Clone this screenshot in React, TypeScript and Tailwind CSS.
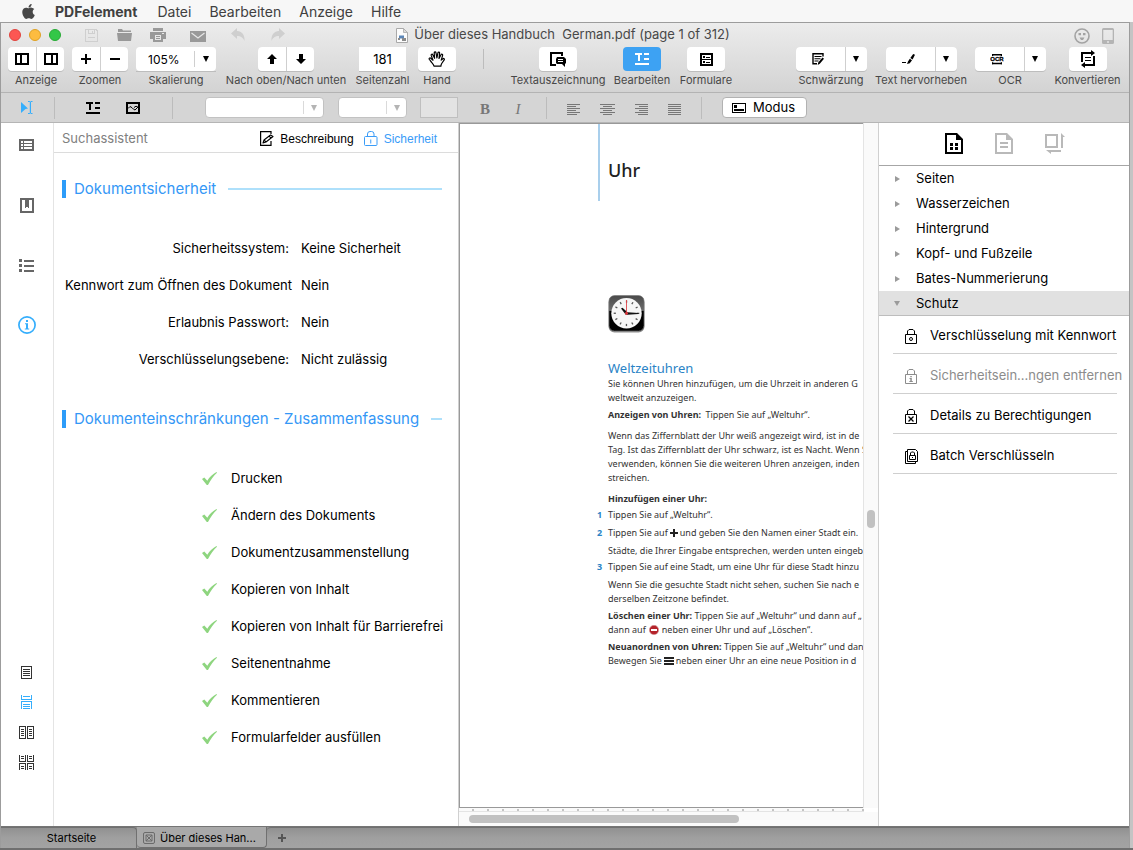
import React from "react";
import type { ReactNode } from "react";
import { FaApple } from "react-icons/fa";

const MENU = ["Datei", "Bearbeiten", "Anzeige", "Hilfe"];

const SECURITY = [
  { label: "Sicherheitssystem:", value: "Keine Sicherheit" },
  { label: "Kennwort zum Öffnen des Dokument", value: "Nein", flush: true },
  { label: "Erlaubnis Passwort:", value: "Nein" },
  { label: "Verschlüsselungsebene:", value: "Nicht zulässig" },
];

const PERMISSIONS = [
  "Drucken",
  "Ändern des Dokuments",
  "Dokumentzusammenstellung",
  "Kopieren von Inhalt",
  "Kopieren von Inhalt für Barrierefrei",
  "Seitenentnahme",
  "Kommentieren",
  "Formularfelder ausfüllen",
];

const TREE = ["Seiten", "Wasserzeichen", "Hintergrund", "Kopf- und Fußzeile", "Bates-Nummerierung"];

/* ---------- icons ---------- */

function Icon({ w, h, children, crisp = true }: { w: number; h: number; children: ReactNode; crisp?: boolean }) {
  return (
    <svg
      width={w}
      height={h}
      viewBox={`0 0 ${w} ${h}`}
      fill="none"
      stroke="none"
      shapeRendering={crisp ? "crispEdges" : "auto"}
      aria-hidden="true"
      className="block shrink-0"
    >
      {children}
    </svg>
  );
}

const LeftPaneIcon = () => (
  <Icon w={14} h={12}>
    <path fill="currentColor" fillRule="evenodd" d="M0 0h14v12H0zM2 2v8h3V2zM7 2v8h5V2z" />
  </Icon>
);
const RightPaneIcon = () => (
  <Icon w={14} h={12}>
    <path fill="currentColor" fillRule="evenodd" d="M0 0h14v12H0zM2 2v8h5V2zM9 2v8h3V2z" />
  </Icon>
);
const PlusIcon = () => (
  <Icon w={10} h={10}>
    <path fill="currentColor" d="M4 0h2v4h4v2H6v4H4V6H0V4h4z" />
  </Icon>
);
const MinusIcon = () => (
  <Icon w={10} h={10}>
    <path fill="currentColor" d="M0 4h10v2H0z" />
  </Icon>
);
const UpIcon = () => (
  <Icon w={10} h={10} crisp={false}>
    <path fill="currentColor" d="M5 0l5 5H7v5H3V5H0z" />
  </Icon>
);
const DownIcon = () => (
  <Icon w={10} h={10} crisp={false}>
    <path fill="currentColor" d="M5 10l5-5H7V0H3v5H0z" />
  </Icon>
);
const Caret = () => (
  <Icon w={6} h={6} crisp={false}>
    <path fill="currentColor" d="M0 0h6L3 6z" />
  </Icon>
);
const HandIcon = () => (
  <Icon w={18} h={16} crisp={false}>
    <path
      stroke="currentColor"
      strokeWidth="1.2"
      strokeLinecap="round"
      strokeLinejoin="round"
      d="M6 15.2c-.3-1.7-1.2-2.4-2.4-3.8-.9-1-1.4-2.200-2.300-3.100-.7-.8.5-1.900 1.500-1.100L5 9.200 3.200 4.400c-.4-1.200 1.100-1.800 1.600-.7l1.800 3.600L6.200 2c-.1-1.300 1.600-1.400 1.800-.2l.9 5.200L9.900 1.900c.3-1.200 1.900-.9 1.700.3L11 7.500l2-3.700c.6-1.100 2-.4 1.600.8l-1.400 4.500 1.700-1.300c.9-.8 1.900.2 1.300 1.100l-2.500 3.600c-.5.8-.8 1.500-.8 2.700z"
    />
  </Icon>
);
const MarkupIcon = () => (
  <Icon w={16} h={15} crisp={false}>
    <path stroke="currentColor" strokeWidth="2" d="M12 4V1H1v12h5" />
    <path fill="currentColor" fillRule="evenodd" d="M7 5h7l2 2v4l-1 1v3l-3-3H7L6 11V7zM8 7h5v1H8zM8 9h5v1H8z" />
  </Icon>
);
const TextEditIcon = () => (
  <Icon w={14} h={12}>
    <path fill="currentColor" d="M0 0h7v2H5v6H3V2H0zM9 0h5v2H9zM9 5h5v2H9zM0 10h14v2H0z" />
  </Icon>
);
const FormIcon = () => (
  <Icon w={13} h={13}>
    <path fill="currentColor" fillRule="evenodd" d="M0 0h13v13H0zM2 2v4h9V2zM2 7v4h9V7z" />
    <path fill="currentColor" d="M3 3h2v2H3zM3 8h2v2H3zM6 4h4v1H6zM6 9h4v1H6z" />
  </Icon>
);
const RedactIcon = () => (
  <Icon w={12} h={12} crisp={false}>
    <path stroke="currentColor" strokeWidth="1.400" d="M11 3.500V.7H1v10h4" />
    <path fill="currentColor" d="M2.500 3h7v1h-7zM2.500 5.200h6v1h-6zM2.500 7.400h4v1h-4zM10.500 4.500l1.500 1.300-4.200 5L5.700 12l.5-2.500z" />
  </Icon>
);
const HighlightIcon = () => (
  <Icon w={13} h={10} crisp={false}>
    <path fill="currentColor" d="M0 8h4v1H0zM11.200 0L13 .8 10.600 5.500 8.300 4zM7.800 4.700l2.200 1.500-2.200 3L5 10l1-2.500z" />
  </Icon>
);
const OcrIcon = () => (
  <Icon w={14} h={12} crisp={false}>
    <path fill="currentColor" d="M2 1h10v1.400H2zM2 9.800h10v1.400H2z" />
    <path fill="currentColor" d="M2 1h1.200v2H2zM10.800 1H12v2h-1.200zM2 9.200h1.200v2H2zM10.800 9.200H12v2h-1.200z" />
    <text x="7" y="8.200" textAnchor="middle" fill="currentColor" stroke="currentColor" strokeWidth=".3" fontSize="6" fontWeight="700" fontFamily="Liberation Sans, sans-serif">
      OCR
    </text>
  </Icon>
);
const ConvertIcon = () => (
  <Icon w={14} h={18} crisp={false}>
    <path fill="currentColor" d="M0 2h10V0l4 3-4 3V4H2v8H0zM14 16H4v2l-4-3 4-3v2h8V6h2zM4 7h6v1H4zM4 10h6v1H4z" />
  </Icon>
);
const CursorIcon = () => (
  <Icon w={13} h={14} crisp={false}>
    <path fill="currentColor" d="M1 1l7 6.500-2.500.4L1 12zM8 0h1.500l.8.700L11 0h1.500v1H11v11h1.500v1H11l-.7-.7-.8.700H8v-1h1.800V1H8z" />
  </Icon>
);
const PictureIcon = () => (
  <Icon w={14} h={12} crisp={false}>
    <path stroke="currentColor" strokeWidth="2" d="M1 1h12v10H1z" />
    <path stroke="currentColor" strokeWidth="1" d="M2 6.500l2-2 2 1.200 1.500 1.500L9 8l3-3M8 5.500l2-1.300 2 1" />
  </Icon>
);
const ModeIcon = () => (
  <Icon w={14} h={10}>
    <path fill="currentColor" fillRule="evenodd" d="M0 0h14v10H0zM1 1v8h12V1z" />
    <path fill="currentColor" d="M2 2h3v3H2zM2 6h10v2H2z" />
  </Icon>
);
const ALIGN_PATHS = [
  "M0 0h13v1H0zM0 2h9v1H0zM0 4h13v1H0zM0 6h9v1H0zM0 8h13v1H0zM0 10h10v1H0z",
  "M0 0h15v1H0zM3 2h9v1H3zM0 4h15v1H0zM3 6h9v1H3zM0 8h15v1H0zM3 10h9v1H3z",
  "M0 0h13v1H0zM4 2h9v1H4zM0 4h13v1H0zM4 6h9v1H4zM0 8h13v1H0zM3 10h10v1H3z",
  "M0 0h13v1H0zM0 2h13v1H0zM0 4h13v1H0zM0 6h13v1H0zM0 8h13v1H0zM0 10h13v1H0z",
];
const ALIGN_NAMES = ["Linksbündig", "Zentriert", "Rechtsbündig", "Blocksatz"];

const SaveIcon = () => (
  <Icon w={13} h={13}>
    <path fill="currentColor" fillRule="evenodd" d="M0 0h11l2 2v11H0zM1 1v11h11V3l-2-2v4H3V1zM4 1v3h5V1z" />
    <path fill="currentColor" d="M7 2h1v2H7zM3 8h7v1H3z" />
  </Icon>
);
const FolderIcon = () => (
  <Icon w={15} h={12} crisp={false}>
    <path fill="currentColor" d="M1 0h4l1 1.500h8V3H1zM0 4h15l-1 8H1z" />
  </Icon>
);
const PrinterIcon = () => (
  <Icon w={16} h={14}>
    <path fill="currentColor" fillRule="evenodd" d="M3 0h10v3H3zM0 4h16v7h-3v3H3v-3H0zM5 7v5h6V7zM12 5v1h2V5z" />
    <path fill="currentColor" d="M6 8h4v1H6zM6 10h4v1H6z" />
  </Icon>
);
const MailIcon = () => (
  <Icon w={16} h={11} crisp={false}>
    <rect width="16" height="11" fill="currentColor" />
    <path stroke="#e6e6e6" strokeWidth="1.200" d="M1.500 2L8 7l6.500-5" />
  </Icon>
);
const UndoIcon = () => (
  <Icon w={14} h={14} crisp={false}>
    <path fill="currentColor" d="M6 0v3c5 .3 8 4 7.500 10C12 9.500 10 8 6 8v3L0 5.500z" />
  </Icon>
);
const RedoIcon = () => (
  <Icon w={14} h={14} crisp={false}>
    <path fill="currentColor" d="M8 0v3C3 3.300 0 7 .5 13 2 9.500 4 8 8 8v3l6-5.500z" />
  </Icon>
);
const PdfFileIcon = () => (
  <Icon w={12} h={15} crisp={false}>
    <path fill="#fcfcfc" stroke="#a9a9a9" d="M.5.5h7l4 4v10H.5z" />
    <path fill="#dcdcdc" stroke="#a9a9a9" strokeWidth=".8" d="M7.500.5v4h4z" />
    <path fill="#5b86b8" d="M3 7.500h5v3H3z" />
    <path fill="#8b8b8b" d="M2 10h2v2H2zM6 10h4v3H6z" />
  </Icon>
);
const SmileyIcon = () => (
  <Icon w={16} h={16} crisp={false}>
    <circle cx="8" cy="8" r="7" stroke="currentColor" strokeWidth="1.600" />
    <path fill="currentColor" d="M4.500 5H7v2.200H4.500zM9 5h2.500v2.200H9zM5.500 9.500h5L9 12H7z" />
  </Icon>
);
const TabletIcon = () => (
  <Icon w={12} h={16} crisp={false}>
    <path fill="currentColor" fillRule="evenodd" d="M1.500 0h9A1.500 1.500 0 0112 1.500v13a1.500 1.500 0 01-1.500 1.500h-9A1.500 1.500 0 010 14.500v-13A1.500 1.500 0 011.500 0zM1.300 2v10h9.400V2zM5 13.200v1.500h2v-1.500z" />
  </Icon>
);

const TableIcon = () => (
  <Icon w={15} h={12}>
    <path fill="currentColor" fillRule="evenodd" d="M0 0h15v12H0zM2 2v2h2V2zM5 2v2h8V2zM2 5v2h2V5zM5 5v2h8V5zM2 8v2h2V8zM5 8v2h8V8z" />
  </Icon>
);
const BookmarkIcon = () => (
  <Icon w={14} h={15}>
    <path fill="currentColor" fillRule="evenodd" d="M0 0h14v15H0zM2 2v11h10V2z" />
    <path fill="currentColor" d="M5 2h4v8H8V9H6v1H5z" />
  </Icon>
);
const ListIcon = () => (
  <Icon w={15} h={13}>
    <path fill="currentColor" d="M0 0h3v3H0zM0 5h3v3H0zM0 10h3v3H0zM5 1h10v2H5zM5 6h10v2H5zM5 11h10v2H5z" />
  </Icon>
);
const InfoIcon = () => (
  <Icon w={18} h={18} crisp={false}>
    <circle cx="9" cy="9" r="8.100" stroke="currentColor" strokeWidth="1.700" />
    <path fill="currentColor" d="M8 4h2v2H8zM7 7.200h3v5.300h1.200v1H6.800v-1H8V8.200H7z" />
  </Icon>
);
const SinglePageIcon = () => (
  <Icon w={11} h={13}>
    <path fill="currentColor" fillRule="evenodd" d="M0 0h11v13H0zM1 1v11h9V1z" />
    <path fill="currentColor" d="M2 3h7v1H2zM2 5h7v1H2zM2 7h7v1H2zM2 9h7v1H2z" />
  </Icon>
);
const ContinuousIcon = () => (
  <Icon w={11} h={14}>
    <path fill="currentColor" d="M0 0h1v4h9V0h1v5H0zM2 1h7v1H2zM0 6h11v8h-1V7H1v7H0zM2 9h7v1H2zM2 11h7v1H2zM2 13h7v1H2z" />
  </Icon>
);
const TwoPageIcon = () => (
  <Icon w={15} h={13}>
    <path fill="currentColor" fillRule="evenodd" d="M0 0h7v13H0zM1 1v11h5V1zM8 0h7v13H8zM9 1v11h5V1z" />
    <path fill="currentColor" d="M2 3h3v1H2zM2 5h3v1H2zM2 7h3v1H2zM2 9h3v1H2zM10 3h3v1h-3zM10 5h3v1h-3zM10 7h3v1h-3zM10 9h3v1h-3z" />
  </Icon>
);
const TwoPageContinuousIcon = () => (
  <Icon w={15} h={15}>
    <path
      fill="currentColor"
      d="M0 0h1v6h5V0h1v7H0zM8 0h1v6h5V0h1v7H8zM2 1h3v1H2zM2 3h3v1H2zM10 1h3v1h-3zM10 3h3v1h-3zM0 8h7v7H6V9H1v6H0zM8 8h7v7h-1V9H9v6H8zM2 11h3v1H2zM2 13h3v1H2zM10 11h3v1h-3zM10 13h3v1h-3z"
    />
  </Icon>
);

const DescribeIcon = () => (
  <Icon w={14} h={15} crisp={false}>
    <path stroke="currentColor" strokeWidth="1.200" d="M11 3V.6H.6v13.800H11V10" />
    <path stroke="currentColor" strokeWidth="1.100" strokeLinejoin="round" d="M3 12l1-3 6.500-5L13 5.500 6 11zM9 5l2 2.200M4.500 9.500L6 11" />
  </Icon>
);
const LockOutlineIcon = () => (
  <Icon w={14} h={15} crisp={false}>
    <rect x=".5" y="5.500" width="12.500" height="9" rx="1" stroke="currentColor" />
    <path stroke="currentColor" d="M3.500 5.500V3a2.500 2.500 0 012.500-2.500h1.500A2.500 2.500 0 0110 3v2.500M6.750 8.500v4" />
  </Icon>
);
const CheckIcon = () => (
  <Icon w={15} h={14} crisp={false}>
    <path fill="#8ed57f" d="M0 7L2.300 5.500l3 3.300C7.500 5 10.800 2 14.500 0l.5.700C11.500 4 8.500 8 6 13H4.800z" />
  </Icon>
);

const PageGridIcon = () => (
  <Icon w={18} h={21} crisp={false}>
    <path fill="currentColor" fillRule="evenodd" d="M0 0h12l6 6v15H0zM2 2v17h14V7h-5V2z" />
    <path fill="currentColor" d="M5 10h3v3H5zM10 10h3v3h-3zM5 14h3v3H5zM10 14h3v3h-3z" />
  </Icon>
);
const PageTextIcon = () => (
  <Icon w={18} h={21} crisp={false}>
    <path fill="currentColor" fillRule="evenodd" d="M0 0h12l6 6v15H0zM2 2v17h14V7h-5V2zM5 9h8v2H5zM5 13h8v2H5z" />
  </Icon>
);
const ScaleIcon = () => (
  <Icon w={20} h={21} crisp={false}>
    <path fill="currentColor" fillRule="evenodd" d="M0 1h13v14H0zM2 3v10h9V3zM16 0l4 4h-2v11h-2zM16 17v2H6v2l-5-4z" />
  </Icon>
);

function LockIcon({ kind }: { kind: "ring" | "info" | "cross" }) {
  return (
    <Icon w={12} h={15} crisp={false}>
      <path stroke="currentColor" strokeWidth="1" d="M.5 5.500h11v9H.5zM2.500 5.500V2l1.500-1.500h4L9.500 2v3.500" />
      {kind === "ring" && <circle cx="6" cy="10" r="1.500" stroke="currentColor" strokeWidth="1" />}
      {kind === "info" && <path fill="currentColor" d="M5.300 7h1.500v1.300H5.300zM4.500 9h2.300v3h1v1H4.400v-1h.9v-2h-.8z" />}
      {kind === "cross" && <path stroke="currentColor" strokeWidth="1.300" d="M3.500 7.500l5 5M8.500 7.500l-5 5" />}
    </Icon>
  );
}
const BatchLockIcon = () => (
  <Icon w={13} h={15} crisp={false}>
    <path stroke="currentColor" d="M2.500.5h8l2 2v10h-10zM2 2.500H.5v12h10V13" />
    <path stroke="currentColor" d="M4.500 6.500h6v4h-6zM5.500 6.500V4l1-1h2l1 1v2.500M7.500 8v1" />
  </Icon>
);

/* ---------- toolbar parts ---------- */

const KEY = "flex h-6 items-center justify-center bg-white text-black";
const FIELD_SHADOW = "shadow-[0_1px_0_#bdbdbd]";

function Group({ width, label, htmlFor, children }: { width: string; label: string; htmlFor?: string; children: ReactNode }) {
  return (
    <div className={`flex shrink-0 flex-col items-center ${width}`}>
      {children}
      {htmlFor ? (
        <label htmlFor={htmlFor} className="mt-px whitespace-nowrap text-[11px] leading-[17px] text-[#484848]">
          {label}
        </label>
      ) : (
        <span className="mt-px whitespace-nowrap text-[11px] leading-[17px] text-[#484848]">{label}</span>
      )}
    </div>
  );
}

function Pair({ names, children }: { names: [string, string]; children: [ReactNode, ReactNode] }) {
  return (
    <div className={`flex w-14 gap-px rounded bg-[#cfcfcf] ${FIELD_SHADOW}`}>
      <button type="button" aria-label={names[0]} className={`${KEY} w-7 rounded-l`}>
        {children[0]}
      </button>
      <button type="button" aria-label={names[1]} className={`${KEY} flex-1 rounded-r`}>
        {children[1]}
      </button>
    </div>
  );
}

function Single({ name, active, children }: { name: string; active?: boolean; children: ReactNode }) {
  return (
    <button
      type="button"
      aria-label={name}
      className={
        active
          ? "flex h-6 w-[38px] items-center justify-center rounded bg-[#3da2f3] text-white"
          : `${KEY} w-[38px] rounded ${FIELD_SHADOW}`
      }
    >
      {children}
    </button>
  );
}

function Split({ name, children }: { name: string; children: ReactNode }) {
  return (
    <div className={`flex gap-px rounded bg-[#cfcfcf] ${FIELD_SHADOW}`}>
      <button type="button" aria-label={name} className={`${KEY} w-[49px] rounded-l pr-1`}>
        {children}
      </button>
      <button type="button" aria-label={`${name} Optionen`} className={`${KEY} w-[21px] rounded-r`}>
        <Caret />
      </button>
    </div>
  );
}

function FormatSelect({ name, width }: { name: string; width: string }) {
  return (
    <div className={`relative h-[21px] shrink-0 ${width}`}>
      <select aria-label={name} className="h-full w-full appearance-none rounded-sm border border-[#c2c2c2] bg-white">
        <option></option>
      </select>
      <span className="pointer-events-none absolute inset-y-1 right-0 flex w-[21px] items-center justify-center border-l border-[#dadada] text-[#b4b4b4]">
        <Caret />
      </span>
    </div>
  );
}

const Divider = () => <span className="h-[22px] w-px shrink-0 bg-[#bcbcbc]" />;

/* ---------- document ---------- */

function Lines({ gap, lines, number }: { gap: string; lines: ReactNode[]; number?: string }) {
  return (
    <div className={`flex ${gap}`}>
      <span className="w-[11px] shrink-0 font-bold text-[#2a83c6]">{number}</span>
      <p>
        {lines.map((line, i) => (
          <span key={i} className="block">
            {line}
          </span>
        ))}
      </p>
    </div>
  );
}

const ClockFace = () => (
  <Icon w={37} h={38} crisp={false}>
    <defs>
      <linearGradient id="clock-case" x1="0" y1="0" x2="0" y2="1">
        <stop offset="0" stopColor="#4a4a4a" />
        <stop offset=".42" stopColor="#6b6b6b" />
        <stop offset=".45" stopColor="#000" />
        <stop offset="1" stopColor="#000" />
      </linearGradient>
    </defs>
    <rect x=".5" y="1.500" width="36" height="36" rx="6" fill="#8f8f8f" />
    <rect x="1" y=".5" width="35" height="35.500" rx="5.500" fill="url(#clock-case)" stroke="#777" strokeWidth=".6" />
    <circle cx="18.500" cy="18.300" r="15.200" fill="#f6f6f6" />
    {Array.from({ length: 12 }, (_, i) => (
      <rect key={i} x="17.900" y="5.500" width="1.300" height="2.200" fill="#555" transform={`rotate(${i * 30} 18.500 18.300)`} />
    ))}
    <path fill="#111" d="M13 13.500l1.500-.8 5 4.600 11 .600v1l-11 .8-1.500.3z" />
    <path stroke="#e0454a" strokeWidth=".9" d="M18.500 5v15" />
    <circle cx="18.500" cy="18.300" r="1.500" fill="#d8353b" />
  </Icon>
);

function SectionTitle({ children }: { children: ReactNode }) {
  return (
    <div className="flex items-center pl-2 pr-4">
      <span className="h-[18px] w-1 shrink-0 bg-[#2d9cf9]" />
      <h2 className="ml-2 whitespace-nowrap text-[15px] leading-[18px] text-[#3497f6]">{children}</h2>
      <span className="ml-3 h-0.5 flex-1 bg-[#aee0fb]" />
    </div>
  );
}

export default function App() {
  return (
    <div className="flex min-h-screen flex-col bg-[#c4c4c4] font-['Inter','Liberation_Sans',sans-serif] text-[13px] text-black">
      {/* system menu */}
      <nav className="flex h-[22px] shrink-0 items-center bg-[#f7f7f7] pl-5 text-[14px] text-[#404040]">
        <button type="button" aria-label="Apple" className="mr-[18px] text-[#484848]">
          <FaApple size={17} />
        </button>
        <button type="button" className="mr-5 font-bold">
          PDFelement
        </button>
        <div className="flex gap-[18px]">
          {MENU.map((m) => (
            <button key={m} type="button">
              {m}
            </button>
          ))}
        </div>
      </nav>

      <div className="mr-[3px] flex flex-1 flex-col border-x border-t border-[#9c9c9c] bg-white">
        {/* title bar */}
        <header className="shrink-0 border-b border-[#b3b3b3] bg-linear-to-b from-[#ececec] to-[#d3d3d3]">
          <div className="grid h-6 grid-cols-[1fr_auto_1fr] items-center">
            <div className="flex items-center pl-2 text-[#999]">
              <div className="flex gap-2">
                <button type="button" aria-label="Schließen" className="size-3 rounded-full border border-[#e0443e] bg-[#fc5753]" />
                <button type="button" aria-label="Minimieren" className="size-3 rounded-full border border-[#dea123] bg-[#fdbc40]" />
                <button type="button" aria-label="Vergrößern" className="size-3 rounded-full border border-[#27aa35] bg-[#33c748]" />
              </div>
              <button type="button" aria-label="Sichern" className="ml-6 text-[#cfcfcf]">
                <SaveIcon />
              </button>
              <button type="button" aria-label="Öffnen" className="ml-[19px]">
                <FolderIcon />
              </button>
              <button type="button" aria-label="Drucken" className="ml-[18px]">
                <PrinterIcon />
              </button>
              <button type="button" aria-label="E-Mail" className="ml-6 pt-0.5">
                <MailIcon />
              </button>
              <button type="button" aria-label="Widerrufen" className="ml-[25px] text-[#cfcfcf]">
                <UndoIcon />
              </button>
              <button type="button" aria-label="Wiederholen" className="ml-[26px] text-[#cfcfcf]">
                <RedoIcon />
              </button>
            </div>
            <div className="flex items-center gap-1.5 text-[13px] text-[#484848]">
              <PdfFileIcon />
              <h1 className="whitespace-pre pr-1">{"Über dieses Handbuch  German.pdf (page 1 of 312)"}</h1>
            </div>
            <div className="flex items-center justify-end gap-3 pr-[15px] pt-0.5 text-[#a3a3a3]">
              <button type="button" aria-label="Feedback">
                <SmileyIcon />
              </button>
              <button type="button" aria-label="Mobil" className="text-[#b4b4b4]">
                <TabletIcon />
              </button>
            </div>
          </div>

          {/* main toolbar */}
          <div className="flex h-[45px] items-start px-[3px]">
            <Group width="w-16" label="Anzeige">
              <Pair names={["Linke Leiste", "Rechte Leiste"]}>
                <LeftPaneIcon />
                <RightPaneIcon />
              </Pair>
            </Group>
            <Group width="w-16" label="Zoomen">
              <Pair names={["Vergrößern", "Verkleinern"]}>
                <PlusIcon />
                <MinusIcon />
              </Pair>
            </Group>
            <Group width="w-[88px]" label="Skalierung" htmlFor="zoom">
              <div className={`relative h-6 w-20 ${FIELD_SHADOW}`}>
                <select id="zoom" className="h-full w-full appearance-none rounded-sm bg-white pl-3 pt-0.5 text-[12px]">
                  <option>105%</option>
                </select>
                <span className="pointer-events-none absolute inset-y-1 right-0 flex w-[22px] items-center justify-center border-l border-[#cfcfcf]">
                  <Caret />
                </span>
              </div>
            </Group>
            <Group width="w-[132px]" label="Nach oben/Nach unten">
              <Pair names={["Nach oben", "Nach unten"]}>
                <UpIcon />
                <DownIcon />
              </Pair>
            </Group>
            <Group width="w-[61px]" label="Seitenzahl" htmlFor="page">
              <input id="page" defaultValue="181" className={`h-6 w-[47px] bg-white text-center text-[13px] ${FIELD_SHADOW}`} />
            </Group>
            <Group width="w-12" label="Hand">
              <Single name="Hand">
                <HandIcon />
              </Single>
            </Group>
            <span className="ml-[22px] mr-[26px] mt-0.5 h-5 w-px shrink-0 bg-[#bcbcbc]" />
            <Group width="w-24" label="Textauszeichnung">
              <Single name="Textauszeichnung">
                <MarkupIcon />
              </Single>
            </Group>
            <Group width="w-[72px]" label="Bearbeiten">
              <Single name="Bearbeiten" active>
                <TextEditIcon />
              </Single>
            </Group>
            <Group width="w-14" label="Formulare">
              <Single name="Formulare">
                <FormIcon />
              </Single>
            </Group>
            <div className="ml-auto flex">
              <Group width="w-20" label="Schwärzung">
                <Split name="Schwärzung">
                  <RedactIcon />
                </Split>
              </Group>
              <Group width="w-[100px]" label="Text hervorheben">
                <Split name="Text hervorheben">
                  <HighlightIcon />
                </Split>
              </Group>
              <Group width="w-[78px]" label="OCR">
                <Split name="OCR">
                  <OcrIcon />
                </Split>
              </Group>
              <Group width="w-[77px]" label="Konvertieren">
                <Single name="Konvertieren">
                  <ConvertIcon />
                </Single>
              </Group>
            </div>
          </div>
        </header>

        {/* format bar */}
        <div className="flex h-[30px] shrink-0 items-center border-b border-[#b5b5b5] bg-[#d5d5d5] pl-[19px]">
          <button type="button" aria-label="Auswahl" className="mr-[21px] text-[#35aefc]">
            <CursorIcon />
          </button>
          <Divider />
          <button type="button" aria-label="Text bearbeiten" className="ml-[31px]">
            <TextEditIcon />
          </button>
          <button type="button" aria-label="Bild bearbeiten" className="ml-[26px] mr-8">
            <PictureIcon />
          </button>
          <Divider />
          <span className="w-8 shrink-0" />
          <FormatSelect name="Schriftart" width="w-[119px]" />
          <span className="w-[14px] shrink-0" />
          <FormatSelect name="Schriftgröße" width="w-[69px]" />
          <button type="button" aria-label="Schriftfarbe" className="ml-[13px] h-[21px] w-[38px] shrink-0 border border-[#bfbfbf] bg-[#e3e3e3]" />
          <button type="button" className="ml-[15px] w-6 pt-1 font-['Liberation_Serif',serif] text-[15px] font-bold text-[#777]">
            B
          </button>
          <button type="button" className="ml-[9px] w-6 pt-1 font-['Liberation_Serif',serif] text-[15px] italic text-[#777]">
            I
          </button>
          <span className="w-4 shrink-0" />
          <Divider />
          <div className="mx-5 flex gap-5 pt-1 text-[#777]">
            {ALIGN_PATHS.map((d, i) => (
              <button key={d} type="button" aria-label={ALIGN_NAMES[i]}>
                <Icon w={i === 1 ? 15 : 13} h={11}>
                  <path fill="currentColor" d={d} />
                </Icon>
              </button>
            ))}
          </div>
          <Divider />
          <button
            type="button"
            className="ml-5 flex h-[21px] shrink-0 items-center gap-[7px] rounded border border-[#b2b2b2] bg-white pl-[9px] pr-[11px] text-[13px]"
          >
            <ModeIcon />
            Modus
          </button>
        </div>

        <div className="flex flex-1">
          {/* icon rail */}
          <div className="flex w-[53px] shrink-0 flex-col items-center border-r border-[#e4e4e4] pb-[49px] pr-px text-[#666]">
            <div className="mt-[7px] flex flex-col gap-[30px]">
              <button type="button" aria-label="Miniaturen" className="flex h-[30px] items-center justify-center">
                <TableIcon />
              </button>
              <button type="button" aria-label="Lesezeichen" className="flex h-[30px] items-center justify-center">
                <BookmarkIcon />
              </button>
              <button type="button" aria-label="Gliederung" className="flex h-[30px] items-center justify-center">
                <ListIcon />
              </button>
              <button type="button" aria-label="Information" className="flex h-[30px] items-center justify-center text-[#35aefc]">
                <InfoIcon />
              </button>
            </div>
            <div className="mt-auto flex flex-col text-[#333]">
              <button type="button" aria-label="Einzelseite" className="flex h-[30px] items-center justify-center">
                <SinglePageIcon />
              </button>
              <button type="button" aria-label="Fortlaufend" className="flex h-[30px] items-center justify-center text-[#35aefc]">
                <ContinuousIcon />
              </button>
              <button type="button" aria-label="Doppelseite" className="flex h-[30px] items-center justify-center">
                <TwoPageIcon />
              </button>
              <button type="button" aria-label="Doppelseite fortlaufend" className="flex h-[30px] items-center justify-center">
                <TwoPageContinuousIcon />
              </button>
            </div>
          </div>

          {/* security panel */}
          <section className="w-[404px] shrink-0">
            <div className="flex h-[30px] items-center border-b border-[#dcdcdc] pl-2 pr-[21px] pt-0.5">
              <span className="text-[13px] text-[#808080]">Suchassistent</span>
              <div className="ml-auto flex gap-2.5 font-['Liberation_Sans',sans-serif] text-[12px]">
                <button type="button" className="flex items-center gap-1.5">
                  <DescribeIcon />
                  Beschreibung
                </button>
                <button type="button" className="flex items-center gap-1.5 text-[#3a9cf8]">
                  <LockOutlineIcon />
                  Sicherheit
                </button>
              </div>
            </div>

            <div className="pt-[27px]">
              <SectionTitle>Dokumentsicherheit</SectionTitle>
            </div>
            <dl className="pt-8">
              {SECURITY.map((row) => (
                <div key={row.label} className="flex h-[37px] items-center whitespace-nowrap">
                  <dt className={row.flush ? "flex w-[238px] justify-end" : "flex w-[238px] justify-end pr-[3px]"}>{row.label}</dt>
                  <dd className="ml-[9px]">{row.value}</dd>
                </div>
              ))}
            </dl>
            <div className="pt-8">
              <SectionTitle>Dokumenteinschränkungen - Zusammenfassung</SectionTitle>
            </div>
            <ul className="pt-8">
              {PERMISSIONS.map((p) => (
                <li key={p} className="flex h-[37px] items-center gap-[14px] whitespace-nowrap pl-[148px]">
                  <CheckIcon />
                  {p}
                </li>
              ))}
            </ul>
          </section>

          {/* document view */}
          <main className="flex min-w-0 flex-1 flex-col border-l border-[#d0d0d0]">
            <div className="flex min-h-0 flex-1">
              <article className="flex min-w-0 flex-1 flex-col overflow-hidden whitespace-nowrap border border-r-0 border-[#999] bg-white pl-[137px] font-['Noto_Sans',sans-serif] text-[9px] leading-[14px] text-[#333]">
                <div className="ml-px flex h-[77px] shrink-0 items-center border-l-2 border-[#a9cfec] pl-2 pt-[14px]">
                  <h2 className="text-[18px] font-medium text-[#222]">Uhr</h2>
                </div>
                <div className="ml-[11px] mt-[94px]">
                  <ClockFace />
                </div>
                <h3 className="ml-[11px] mt-[26px] text-[13px] leading-[18px] text-[#2a83c6]">Weltzeituhren</h3>
                <Lines gap="" lines={["Sie können Uhren hinzufügen, um die Uhrzeit in anderen G", "weltweit anzuzeigen."]} />
                <Lines
                  gap="mt-[3px]"
                  lines={[
                    <>
                      <b className="mr-0.5">Anzeigen von Uhren:</b> Tippen Sie auf „Weltuhr“.
                    </>,
                  ]}
                />
                <Lines
                  gap="mt-[7px]"
                  lines={[
                    "Wenn das Ziffernblatt der Uhr weiß angezeigt wird, ist in de",
                    "Tag. Ist das Ziffernblatt der Uhr schwarz, ist es Nacht. Wenn S",
                    "verwenden, können Sie die weiteren Uhren anzeigen, inden",
                    "streichen.",
                  ]}
                />
                <Lines gap="mt-[7px]" lines={[<b>Hinzufügen einer Uhr:</b>]} />
                <Lines gap="mt-0.5" number="1" lines={["Tippen Sie auf „Weltuhr“."]} />
                <Lines
                  gap="mt-1"
                  number="2"
                  lines={[
                    <span className="flex items-center gap-0.5">
                      Tippen Sie auf
                      <Icon w={8} h={8}>
                        <path fill="#222" d="M3 0h2v3h3v2H5v3H3V5H0V3h3z" />
                      </Icon>
                      und geben Sie den Namen einer Stadt ein.
                    </span>,
                  ]}
                />
                <Lines gap="mt-1" lines={["Städte, die Ihrer Eingabe entsprechen, werden unten eingeb"]} />
                <Lines gap="mt-0.5" number="3" lines={["Tippen Sie auf eine Stadt, um eine Uhr für diese Stadt hinzu"]} />
                <Lines gap="mt-1" lines={["Wenn Sie die gesuchte Stadt nicht sehen, suchen Sie nach e", "derselben Zeitzone befindet."]} />
                <Lines
                  gap="mt-[3px]"
                  lines={[
                    <>
                      <b>Löschen einer Uhr:</b> Tippen Sie auf „Weltuhr“ und dann auf „
                    </>,
                    <span className="flex items-center gap-[3px]">
                      dann auf
                      <Icon w={10} h={10} crisp={false}>
                        <circle cx="5" cy="5" r="4.700" fill="#b5232b" stroke="#d9a3a5" strokeWidth=".6" />
                        <path fill="#fff" d="M2 4h6v2H2z" />
                      </Icon>
                      neben einer Uhr und auf „Löschen“.
                    </span>,
                  ]}
                />
                <Lines
                  gap="mt-[3px]"
                  lines={[
                    <>
                      <b>Neuanordnen von Uhren:</b> Tippen Sie auf „Weltuhr“ und dan
                    </>,
                    <span className="flex items-center gap-0.5">
                      Bewegen Sie
                      <Icon w={10} h={8}>
                        <path fill="#222" d="M0 0h10v2H0zM0 3h10v2H0zM0 6h10v2H0z" />
                      </Icon>
                      neben einer Uhr an eine neue Position in d
                    </span>,
                  ]}
                />
              </article>
              <div className="flex w-[15px] shrink-0 flex-col items-center border-l border-[#e4e4e4] bg-[#fafafa] pt-[387px]">
                <span className="h-[18px] w-2 rounded-full bg-[#c1c1c1]" />
              </div>
            </div>
            <div className="mr-[14px] h-1 shrink-0 border-b border-[#e4e4e4] bg-[#fafafa] bg-[radial-gradient(circle_at_14px_2px,#c4c4c4_1px,transparent_1px)] bg-size-[15px_4px]" />
            <div className="h-[14px] shrink-0 bg-[#fafafa] pl-2.5 pt-[3px]">
              <div className="h-2 w-[66%] rounded-full bg-[#c1c1c1]" />
            </div>
          </main>

          {/* page tools */}
          <aside className="w-[251px] shrink-0 border-l border-[#d0d0d0]">
            <div className="flex h-[43px] items-center justify-center gap-8 border-b border-[#a6a6a6] pb-0.5 pl-0.5 text-[#b9b9b9]">
              <button type="button" aria-label="Seitenwerkzeuge" className="text-black">
                <PageGridIcon />
              </button>
              <button type="button" aria-label="Dokument">
                <PageTextIcon />
              </button>
              <button type="button" aria-label="Skalieren">
                <ScaleIcon />
              </button>
            </div>
            <ul>
              {TREE.map((t) => (
                <li key={t}>
                  <button type="button" className="flex h-[25px] w-full items-center gap-4 pl-4">
                    <span className="text-[#9b9b9b]">
                      <Icon w={5} h={6} crisp={false}>
                        <path fill="currentColor" d="M0 0v6l5-3z" />
                      </Icon>
                    </span>
                    {t}
                  </button>
                </li>
              ))}
              <li>
                <button type="button" aria-expanded="true" className="flex h-[25px] w-full items-center gap-4 border-b border-[#bdbdbd] bg-[#e1e1e1] pl-[15px] pt-px">
                  <span className="text-[#9b9b9b]">
                    <Icon w={6} h={5} crisp={false}>
                      <path fill="currentColor" d="M0 0h6L3 5z" />
                    </Icon>
                  </span>
                  Schutz
                </button>
                <ul className="-mt-0.5 ml-[14px] mr-3">
                  {[
                    { text: "Verschlüsselung mit Kennwort", icon: <LockIcon kind="ring" /> },
                    { text: "Sicherheitsein...ngen entfernen", icon: <LockIcon kind="info" />, off: true },
                    { text: "Details zu Berechtigungen", icon: <LockIcon kind="cross" /> },
                    { text: "Batch Verschlüsseln", icon: <BatchLockIcon /> },
                  ].map((item) => (
                    <li key={item.text} className="border-b border-[#cfcfcf]">
                      <button
                        type="button"
                        disabled={item.off}
                        className={
                          item.off
                            ? "flex h-[39px] items-center whitespace-nowrap pl-3 pt-1 text-[#8c8c8c]"
                            : "flex h-[39px] items-center whitespace-nowrap pl-3 pt-1 text-black"
                        }
                      >
                        <span className="w-[25px] pt-0.5">{item.icon}</span>
                        {item.text}
                      </button>
                    </li>
                  ))}
                </ul>
              </li>
            </ul>
          </aside>
        </div>

        {/* document tabs */}
        <footer className="flex h-[22px] shrink-0 border-t border-[#757575] bg-linear-to-b from-[#8f8f8f] via-[#9f9f9f] to-[#a3a3a3] text-[11px]">
          <button type="button" className="w-[136px] rounded-tr border-r border-t border-[#707070] pl-1.5 pt-px">
            Startseite
          </button>
          <div className="flex w-[130px] items-center gap-[5px] rounded-b border-b border-r border-[#707070] bg-[#a9a9a9] pl-1.5 pt-0.5">
            <button type="button" aria-label="Tab schließen" className="text-[#6b6b6b]">
              <Icon w={12} h={12} crisp={false}>
                <rect x=".5" y=".5" width="11" height="11" rx="1.500" stroke="currentColor" />
                <path stroke="currentColor" d="M3 3l6 6M9 3L3 9M3 3h6v6H3z" />
              </Icon>
            </button>
            <button type="button" className="whitespace-nowrap">
              Über dieses Han...
            </button>
          </div>
          <button type="button" aria-label="Neuer Tab" className="flex flex-1 items-center rounded-tl border-t border-[#707070] pb-px pl-[11px] text-[#555]">
            <Icon w={8} h={8}>
              <path fill="currentColor" d="M3 0h2v3h3v2H5v3H3V5H0V3h3z" />
            </Icon>
          </button>
        </footer>
      </div>
      <div className="h-0.5 shrink-0 bg-[#6f6f6f]" />
    </div>
  );
}
